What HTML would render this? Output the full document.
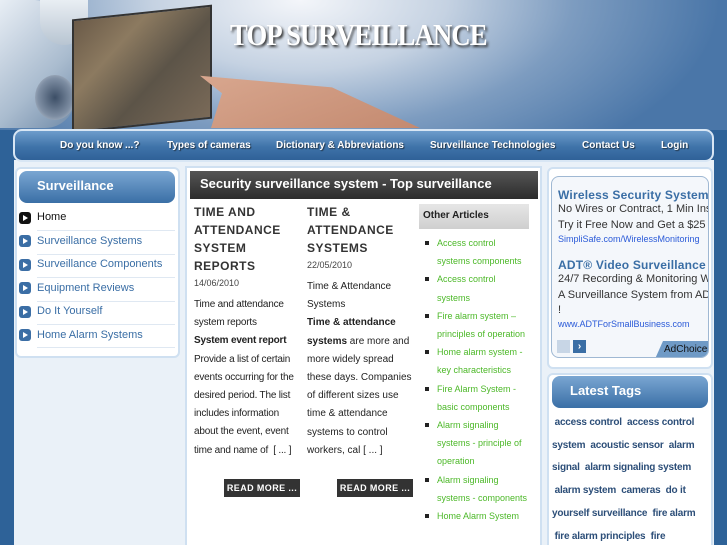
<!DOCTYPE html>
<html><head><meta charset="utf-8"><style>
*{margin:0;padding:0;box-sizing:border-box}
html{width:727px;height:545px;overflow:hidden}
body{width:727px;height:545px;overflow:hidden;background:#2e6298;font-family:"Liberation Sans",sans-serif;position:relative}
.a{position:absolute}
#hdr{left:0;top:0;width:727px;height:130px;background:radial-gradient(ellipse 420px 200px at 300px 0px,#f4f6fa 0%,#c5d2e2 35%,#7d9cc0 65%,#4a76a8 100%)}
#title{left:230px;top:17px;font-family:"Liberation Serif",serif;font-weight:bold;font-size:31px;color:#fff;text-shadow:2px 2px 3px #333;transform:scaleX(.86);transform-origin:left;white-space:nowrap;letter-spacing:-1px}
#nav{left:13px;top:129px;width:701px;height:33px;border-radius:9px;border:2px solid #d8e6f4;background:linear-gradient(#6d9ccb,#3f73a9 55%,#2f6198)}
#nav span{position:absolute;top:9px;color:#fff;font-weight:bold;font-size:10px;text-shadow:1px 1px 1px #234}
.box{background:#fff;border:2px solid #cfe0f1;border-radius:6px}
.hb{border-radius:8px;background:linear-gradient(#7aa6d2,#3a6fa6);color:#fff;font-weight:bold;font-size:13px}
.mi{position:absolute;left:20px;font-size:11px;color:#3a6ea5;width:156px}
.ic{position:absolute;left:19px;width:12px;height:12px;border-radius:3px;background:#3b6ea5}
.ic:after{content:"";position:absolute;left:4px;top:3px;border-left:5px solid #fff;border-top:3px solid transparent;border-bottom:3px solid transparent}
.sep{position:absolute;left:37px;width:138px;height:1px;background:#dfe8f2}
.t{font-size:12px;font-weight:bold;color:#333;letter-spacing:.5px;line-height:18px}
.p{font-size:10px;color:#222;line-height:18.2px;letter-spacing:-.2px}
.oa li{list-style:none;position:relative;padding-left:16px;font-size:9px;color:#4cb828;line-height:18.2px}
.oa li:before{content:"";position:absolute;left:4px;top:7px;width:4px;height:4px;background:#222}
.rm{background:#333;color:#fff;font-size:9px;font-weight:bold;width:76px;height:18px;line-height:18px;text-align:center;letter-spacing:.4px}
.tags{font-size:10px;font-weight:bold;color:#2c4e78;line-height:22.7px;white-space:nowrap;letter-spacing:-.2px}
</style></head><body>
<div id="hdr" class="a"></div>
<div class="a" style="left:0;top:0;width:75px;height:128px;background:linear-gradient(135deg,#e8eef5,#aabccf 60%,#6f8aa8);border-radius:0 40px 30px 0"></div>
<div class="a" style="left:35px;top:75px;width:40px;height:45px;border-radius:50%;background:radial-gradient(#3c4e66,#7e8ea3 60%,#cfd8e2)"></div>
<div class="a" style="left:40px;top:0;width:48px;height:45px;background:linear-gradient(#e9eef3,#b8c5d2);border-radius:0 0 30px 30px"></div>
<div class="a" style="left:72px;top:12px;width:140px;height:114px;background:linear-gradient(135deg,#6a5a48,#8c7a60 30%,#5c5448 60%,#7a6a58);transform:skewY(-6deg);border:2px solid #333"></div>
<div class="a" style="left:200px;top:70px;width:220px;height:58px;background:linear-gradient(160deg,#d9a890,#c48a70);clip-path:polygon(0 10%,60% 30%,100% 100%,5% 100%,10% 40%)"></div>
<div id="title" class="a">TOP SURVEILLANCE</div>
<div class="a" style="left:14px;top:160px;width:700px;height:385px;background:#eaf1f8"></div>
<div id="nav" class="a">
<span style="left:45px">Do you know ...?</span>
<span style="left:152px">Types of cameras</span>
<span style="left:261px">Dictionary &amp; Abbreviations</span>
<span style="left:415px">Surveillance Technologies</span>
<span style="left:567px">Contact Us</span>
<span style="left:646px">Login</span>
</div>

<div class="a box" style="left:15px;top:167px;width:165px;height:191px"></div>
<div class="a hb" style="left:19px;top:171px;width:156px;height:32px;padding:7px 18px">Surveillance</div>
<div class="ic" style="top:212px;background:#111"></div><div class="mi" style="left:37px;top:211px;color:#111">Home</div>
<div class="sep" style="top:230px"></div>
<div class="ic" style="top:235px"></div><div class="mi" style="left:37px;top:235px">Surveillance Systems</div>
<div class="sep" style="top:254px"></div>
<div class="ic" style="top:259px"></div><div class="mi" style="left:37px;top:258px">Surveillance Components</div>
<div class="sep" style="top:277px"></div>
<div class="ic" style="top:282px"></div><div class="mi" style="left:37px;top:282px">Equipment Reviews</div>
<div class="sep" style="top:301px"></div>
<div class="ic" style="top:306px"></div><div class="mi" style="left:37px;top:305px">Do It Yourself</div>
<div class="sep" style="top:324px"></div>
<div class="ic" style="top:329px"></div><div class="mi" style="left:37px;top:329px">Home Alarm Systems</div>
<div class="sep" style="top:347px"></div>

<div class="a" style="left:185px;top:166px;width:357px;height:380px;background:#fff;border:2px solid #cfe0f1;border-bottom:none"></div>
<div class="a" style="left:190px;top:171px;width:348px;height:28px;background:linear-gradient(#555,#2c2c2c);color:#fff;font-weight:bold;font-size:13px;padding:5px 10px">Security surveillance system - Top surveillance</div>
<div class="a" style="left:194px;top:203px;width:110px">
<div class="t">TIME AND<br>ATTENDANCE<br>SYSTEM<br>REPORTS</div>
<div style="font-size:9px;color:#444;margin:3px 0 8px">14/06/2010</div>
<div class="p">Time and attendance system reports<br><b>System event report</b> Provide a list of certain events occurring for the desired period. The list includes information about the event, event time and name of &nbsp;[ ... ]</div>
</div>
<div class="a" style="left:307px;top:203px;width:108px">
<div class="t">TIME &amp;<br>ATTENDANCE<br>SYSTEMS</div>
<div style="font-size:9px;color:#444;margin:3px 0 8px">22/05/2010</div>
<div class="p" style="letter-spacing:0">Time &amp; Attendance Systems<br><b>Time &amp; attendance systems</b> are more and more widely spread these days. Companies of different sizes use time &amp; attendance systems to control workers, cal [ ... ]</div>
</div>
<div class="a rm" style="left:224px;top:479px">READ MORE ...</div>
<div class="a rm" style="left:337px;top:479px">READ MORE ...</div>
<div class="a" style="left:419px;top:204px;width:110px;height:25px;background:linear-gradient(#e6e6e6,#cfcfcf);font-size:10px;font-weight:bold;padding:6px 4px;color:#222">Other Articles</div>
<ul class="a oa" style="left:421px;top:234px;width:110px">
<li>Access control systems components</li><li>Access control systems</li><li>Fire alarm system – principles of operation</li><li>Home alarm system - key characteristics</li><li>Fire Alarm System - basic components</li><li>Alarm signaling systems - principle of operation</li><li>Alarm signaling systems - components</li><li>Home Alarm System</li>
</ul>

<div class="a box" style="left:547px;top:167px;width:166px;height:202px"></div>
<div class="a" style="left:551px;top:176px;width:158px;height:182px;background:#f4f7fb;border:1px solid #9fb8d3;border-radius:8px;overflow:hidden">
<div style="position:absolute;left:6px;top:11px;white-space:nowrap">
<div style="font-size:12px;font-weight:bold;color:#3a6ea5;letter-spacing:.2px">Wireless Security System</div>
<div style="font-size:11px;color:#333;line-height:15.5px">No Wires or Contract, 1 Min Install<br>Try it Free Now and Get a $25</div>
<div style="font-size:9px;color:#2a5ad8;margin-top:1px">SimpliSafe.com/WirelessMonitoring</div>
<div style="font-size:12px;font-weight:bold;color:#3a6ea5;letter-spacing:.2px;margin-top:14px">ADT® Video Surveillance</div>
<div style="font-size:11px;color:#333;line-height:15.5px">24/7 Recording &amp; Monitoring With<br>A Surveillance System from ADT<br>!</div>
<div style="font-size:9px;color:#2a5ad8">www.ADTForSmallBusiness.com</div>
</div>
<div style="position:absolute;left:5px;top:163px;width:13px;height:13px;background:#c8d6e6"></div>
<div style="position:absolute;left:21px;top:163px;width:13px;height:13px;background:#3a6ea5;color:#fff;font-size:10px;font-weight:bold;text-align:center;line-height:13px">›</div>
<div style="position:absolute;left:103px;top:164px;width:60px;height:18px;background:#6f9ac6;clip-path:polygon(8px 0,100% 0,100% 100%,0 100%)"></div>
<div style="position:absolute;left:112px;top:167px;font-size:10px;color:#111">AdChoices</div>
</div>
<div class="a box" style="left:547px;top:373px;width:166px;height:180px"></div>
<div class="a hb" style="left:552px;top:376px;width:156px;height:32px;padding:7px 18px">Latest Tags</div>
<div class="a tags" style="left:552px;top:412px;width:158px">
<div>&nbsp;access control &nbsp;access control</div>
<div>system &nbsp;acoustic sensor &nbsp;alarm</div>
<div>signal &nbsp;alarm signaling system</div>
<div>&nbsp;alarm system &nbsp;cameras &nbsp;do it</div>
<div>yourself surveillance &nbsp;fire alarm</div>
<div>&nbsp;fire alarm principles &nbsp;fire</div>
</div>
</body></html>
